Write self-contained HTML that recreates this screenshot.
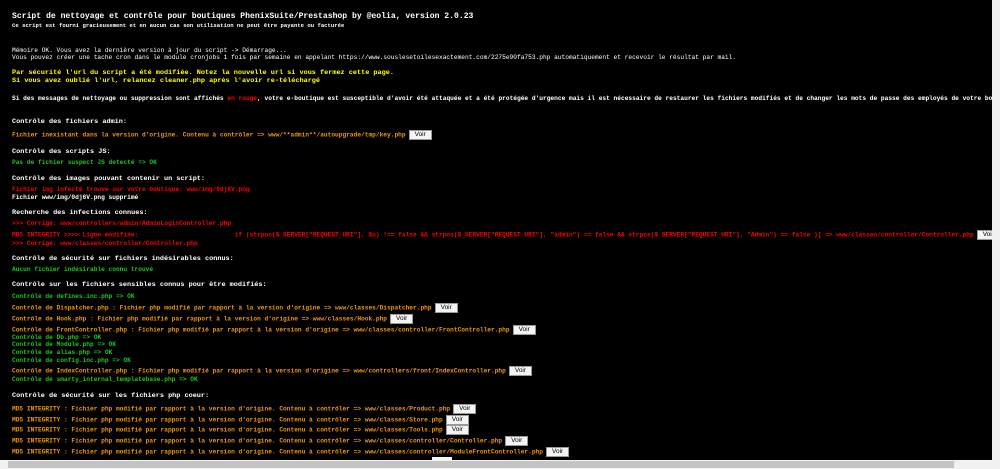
<!DOCTYPE html>
<html><head><meta charset="utf-8"><style>
body{margin:0;width:1000px;height:469px;background:#000;overflow:hidden;position:relative;font-family:"Liberation Mono",monospace;}
.l{position:absolute;left:12px;white-space:pre;font-size:6.2px;line-height:8px;color:#fff;font-weight:bold}
.h{font-size:6.85px;}
.o{color:#f0960f}.g{color:#1ec81e}.r{color:#f00}.y{color:#ff0}
.b{display:inline-block;background:#f4f4f4;border:1px solid #999;color:#000;font-family:"Liberation Sans",sans-serif;font-weight:normal;font-size:6.5px;line-height:8px;padding:0 5px;margin-left:3px;vertical-align:middle}
</style></head><body>
<div class="l" style="top:12px;font-size:8.1px;line-height:10px">Script de nettoyage et contrôle pour boutiques PhenixSuite/Prestashop by @eolia, version 2.0.23</div>
<div class="l" style="top:22px;font-size:5.6px">Ce script est fourni gracieusement et en aucun cas son utilisation ne peut être payante ou facturée</div>
<div class="l" style="top:47px;font-weight:normal">Mémoire OK. Vous avez la dernière version à jour du script -&gt; Démarrage...</div>
<div class="l" style="top:54px;font-weight:normal">Vous pouvez créer une tache cron dans le module cronjobs 1 fois par semaine en appelant https://www.souslesetoilesexactement.com/2275e90fa753.php automatiquement et recevoir le résultat par mail.</div>
<div class="l y h" style="top:69px">Par sécurité l'url du script a été modifiée. Notez la nouvelle url si vous fermez cette page.</div>
<div class="l y h" style="top:77px">Si vous avez oublié l'url, relancez cleaner.php après l'avoir re-téléchargé</div>
<div class="l" style="top:95px">Si des messages de nettoyage ou suppression sont affichés <span class="r">en rouge</span>, votre e-boutique est susceptible d'avoir été attaquée et a été protégée d'urgence mais il est nécessaire de restaurer les fichiers modifiés et de changer les mots de passe des employés de votre boutique.</div>
<div class="l h" style="top:118px">Contrôle des fichiers admin:</div>
<div class="l o" style="top:130px">Fichier inexistant dans la version d'origine. Contenu à contrôler =&gt; www/**admin**/autoupgrade/tmp/key.php<span class="b">Voir</span></div>
<div class="l h" style="top:148px">Contrôle des scripts JS:</div>
<div class="l g" style="top:159px">Pas de fichier suspect JS detecté =&gt; OK</div>
<div class="l h" style="top:175px">Contrôle des images pouvant contenir un script:</div>
<div class="l r" style="top:186px">Fichier img infecté trouvé sur votre boutique: www/img/0dj6V.png</div>
<div class="l" style="top:194px">Fichier www/img/0dj6V.png supprimé</div>
<div class="l h" style="top:209px">Recherche des infections connues:</div>
<div class="l r" style="top:220px">&gt;&gt;&gt; Corrigé: www/controllers/admin/AdminLoginController.php</div>
<div class="l r" style="top:230px">MD5 INTEGRITY &gt;&gt;&gt;&gt; Ligne modifiée:                          if (strpos($_SERVER["REQUEST_URI"], $u) !== false &amp;&amp; strpos($_SERVER["REQUEST_URI"], "admin") == false &amp;&amp; strpos($_SERVER["REQUEST_URI"], "Admin") == false ){ =&gt; www/classes/controller/Controller.php<span class="b">Voir</span></div>
<div class="l r" style="top:240px">&gt;&gt;&gt; Corrigé: www/classes/controller/Controller.php</div>
<div class="l h" style="top:255px">Contrôle de sécurité sur fichiers indésirables connus:</div>
<div class="l g" style="top:266px">Aucun fichier indésirable connu trouvé</div>
<div class="l h" style="top:281px">Contrôle sur les fichiers sensibles connus pour être modifiés:</div>
<div class="l g" style="top:293px">Contrôle de defines.inc.php =&gt; OK</div>
<div class="l o" style="top:303px">Contrôle de Dispatcher.php : Fichier php modifié par rapport à la version d'origine =&gt; www/classes/Dispatcher.php<span class="b">Voir</span></div>
<div class="l o" style="top:314px">Contrôle de Hook.php : Fichier php modifié par rapport à la version d'origine =&gt; www/classes/Hook.php<span class="b">Voir</span></div>
<div class="l o" style="top:325px">Contrôle de FrontController.php : Fichier php modifié par rapport à la version d'origine =&gt; www/classes/controller/FrontController.php<span class="b">Voir</span></div>
<div class="l g" style="top:334px">Contrôle de Db.php =&gt; OK</div>
<div class="l g" style="top:341px">Contrôle de Module.php =&gt; OK</div>
<div class="l g" style="top:349px">Contrôle de alias.php =&gt; OK</div>
<div class="l g" style="top:357px">Contrôle de config.inc.php =&gt; OK</div>
<div class="l o" style="top:366px">Contrôle de IndexController.php : Fichier php modifié par rapport à la version d'origine =&gt; www/controllers/front/IndexController.php<span class="b">Voir</span></div>
<div class="l g" style="top:376px">Contrôle de smarty_internal_templatebase.php =&gt; OK</div>
<div class="l h" style="top:392px">Contrôle de sécurité sur les fichiers php coeur:</div>
<div class="l o" style="top:404px">MD5 INTEGRITY : Fichier php modifié par rapport à la version d'origine. Contenu à contrôler =&gt; www/classes/Product.php<span class="b">Voir</span></div>
<div class="l o" style="top:415px">MD5 INTEGRITY : Fichier php modifié par rapport à la version d'origine. Contenu à contrôler =&gt; www/classes/Store.php<span class="b">Voir</span></div>
<div class="l o" style="top:425px">MD5 INTEGRITY : Fichier php modifié par rapport à la version d'origine. Contenu à contrôler =&gt; www/classes/Tools.php<span class="b">Voir</span></div>
<div class="l o" style="top:436px">MD5 INTEGRITY : Fichier php modifié par rapport à la version d'origine. Contenu à contrôler =&gt; www/classes/controller/Controller.php<span class="b">Voir</span></div>
<div class="l o" style="top:447px">MD5 INTEGRITY : Fichier php modifié par rapport à la version d'origine. Contenu à contrôler =&gt; www/classes/controller/ModuleFrontController.php<span class="b">Voir</span></div>
<div style="position:absolute;left:432px;top:457px;width:20px;height:3px;background:#f4f4f4"></div>
<div style="position:absolute;right:0;top:0;width:8px;height:469px;background:#f1f1f1"></div>
<div style="position:absolute;left:0;top:460px;width:1000px;height:9px;background:#f1f1f1"></div>
<div style="position:absolute;left:8px;top:461px;width:946px;height:7px;background:#c4c4c4"></div>
</body></html>
